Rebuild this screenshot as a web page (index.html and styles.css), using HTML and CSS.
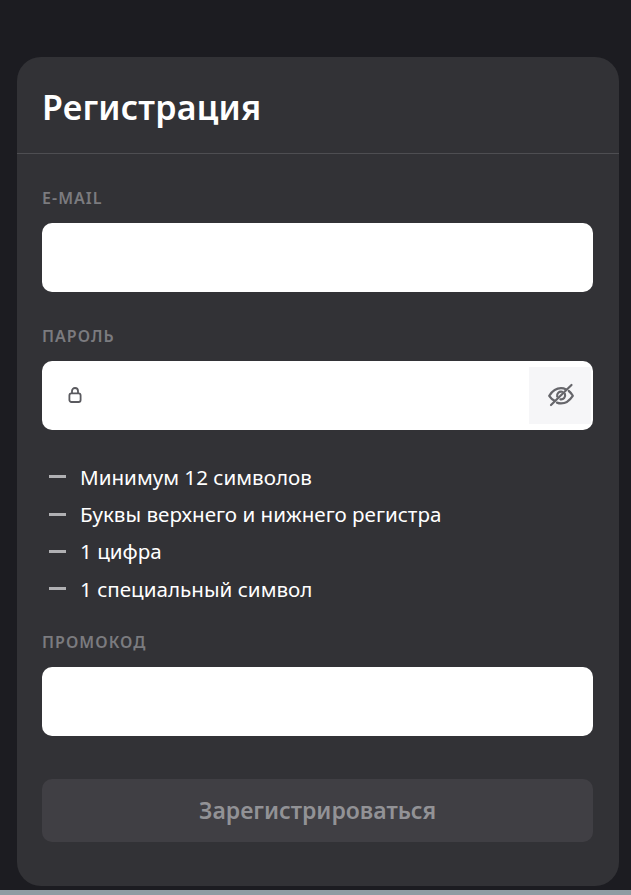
FILE: index.html
```html
<!DOCTYPE html>
<html lang="ru">
<head>
    <meta charset="UTF-8">
    <meta name="viewport" content="width=device-width, initial-scale=1.0">
    <title>Регистрация</title>
    <link rel="stylesheet" href="styles.css">
</head>
<body>
    <div class="page">
        <div class="card">
            <div class="card-header">
                <h1>Регистрация</h1>
            </div>
            <form class="card-body">
                <label class="field-label" for="email">E-mail</label>
                <div class="input-box">
                    <input type="text" id="email">
                </div>

                <label class="field-label field-label-next" for="password">Пароль</label>
                <div class="input-box">
                    <svg class="lock-icon" viewBox="0 0 14 16" width="14" height="16" fill="none" stroke="#5a5a5f" stroke-width="1.8">
                        <rect x="1.4" y="6.4" width="11.2" height="8.600" rx="2"/>
                        <path d="M4 6.400V4a3 3 0 0 1 6 0v2.400"/>
                    </svg>
                    <input type="password" id="password">
                    <button type="button" class="eye-btn">
                        <svg viewBox="0 0 28 28" width="28" height="28" fill="none" stroke="#66666b" stroke-width="2.200" stroke-linecap="round" stroke-linejoin="round">
                            <path d="M7.500 19.800C5.400 18.600 3.700 17 2.200 14.800 5.500 9.800 9.700 7.200 14 7.200c1.800 0 3.500.4 5.200 1.200"/>
                            <path d="M21.800 10c1.500 1.100 2.900 2.700 4 4.800-3.300 5-7.500 7.600-11.800 7.600-1.400 0-2.800-.3-4.100-.8"/>
                            <path d="M10.200 15.500a4 4 0 0 1 4.900-4.800M17.900 13a4 4 0 0 1-4.500 5.300"/>
                            <path d="M24.500 4 4 24"/>
                        </svg>
                    </button>
                </div>

                <ul class="rules">
                    <li>Минимум 12 символов</li>
                    <li>Буквы верхнего и нижнего регистра</li>
                    <li>1 цифра</li>
                    <li>1 специальный символ</li>
                </ul>

                <label class="field-label" for="promo">Промокод</label>
                <div class="input-box">
                    <input type="text" id="promo">
                </div>

                <button type="button" class="submit-btn" disabled>Зарегистрироваться</button>
            </form>
        </div>
    </div>
    <div class="bottom-strip"></div>
</body>
</html>
```

FILE: styles.css
```css
/* General Styling */
html, body {
    height: 100%;
}

body {
    margin: 0;
    display: flex;
    flex-direction: column;
    height: 895px;
    overflow: hidden;
    font-family: 'Noto Sans', 'Open Sans', sans-serif;
    background: #1c1c21;
    color: #fff;
}

.page {
    flex: 1;
    padding: 57px 12px 4px 17px;
}

.card {
    height: 829px;
    box-sizing: border-box;
    background: #323236;
    border-radius: 24px;
}

.card-header {
    height: 97px;
    box-sizing: border-box;
    padding: 4px 25px 0;
    display: flex;
    align-items: center;
    border-bottom: 1px solid #4e4e52;
}

h1 {
    margin: 0;
    font-size: 34px;
    font-weight: 600;
    letter-spacing: 0.2px;
}

.card-body {
    display: flex;
    flex-direction: column;
    padding: 33px 26px 0 25px;
}

.field-label {
    height: 22px;
    line-height: 22px;
    margin-bottom: 14px;
    font-size: 16px;
    font-weight: 600;
    letter-spacing: 1.05px;
    text-transform: uppercase;
    color: #7b7b7f;
}

.field-label-next {
    margin-top: 33px;
}

.input-box {
    display: flex;
    align-items: center;
    height: 69px;
    box-sizing: border-box;
    background: #fff;
    border-radius: 10px;
    padding: 6px 2px 6px 0;
}

.input-box input {
    flex: 1;
    min-width: 0;
    height: 100%;
    border: none;
    outline: none;
    background: transparent;
    padding: 0 16px;
}

.lock-icon {
    margin-top: -2px;
    margin-left: 26px;
    flex-shrink: 0;
}

.eye-btn {
    width: 62px;
    height: 57px;
    padding: 0 0 2px 2px;
    border: none;
    background: #f6f6f8;
    display: flex;
    align-items: center;
    justify-content: center;
    flex-shrink: 0;
}

.rules {
    list-style: none;
    margin: 28px 0 23px;
    padding: 0;
}

.rules li {
    display: flex;
    align-items: center;
    height: 37.4px;
    font-size: 20.6px;
}

.rules li::before {
    content: "";
    width: 17px;
    height: 3px;
    margin: 0 14px 0 7px;
    background: #b0b0b3;
}

.submit-btn {
    height: 63px;
    margin-top: 43px;
    border: none;
    border-radius: 10px;
    background: #403f44;
    color: #929296;
    font-family: inherit;
    font-size: 23px;
    font-weight: 600;
}

.bottom-strip {
    height: 5px;
    background: #8f9ca3;
}
```
